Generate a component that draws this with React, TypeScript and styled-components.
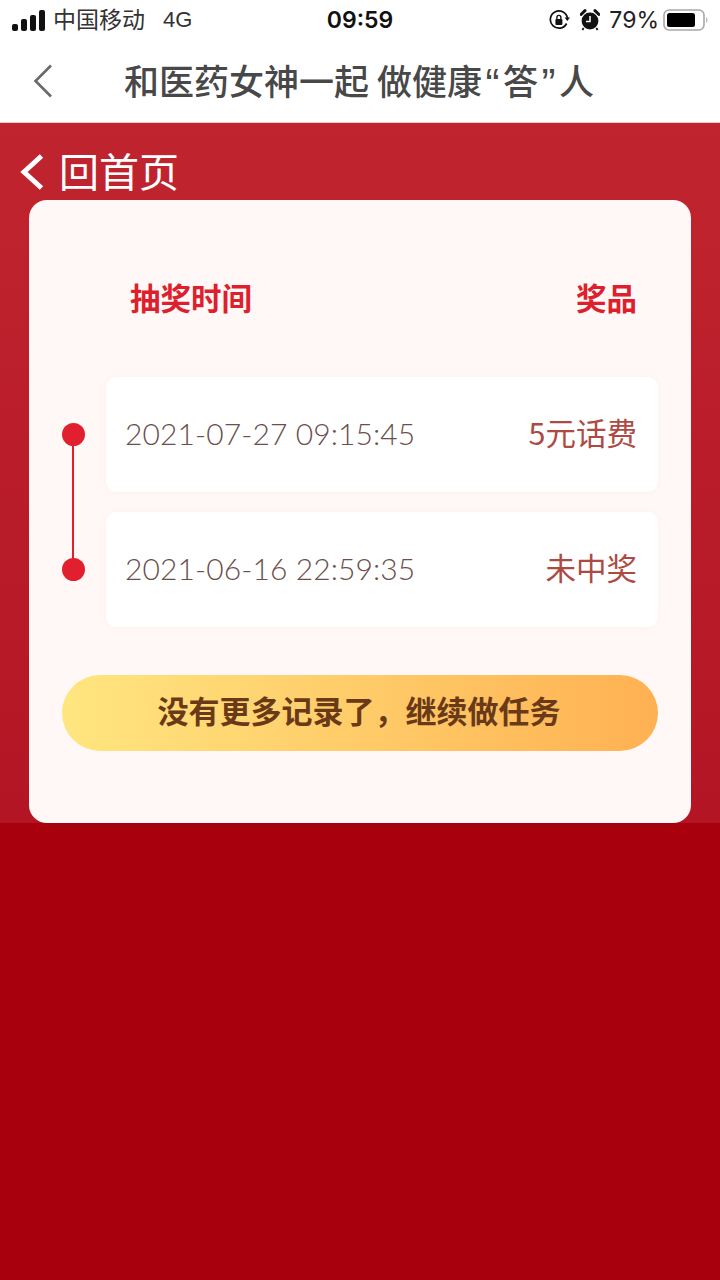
import React from 'react';
import styled, { createGlobalStyle } from 'styled-components';

const cjk = `"Noto Sans CJK SC", "Noto Sans", sans-serif`;

const GlobalStyle = createGlobalStyle`
    html, body {
        margin: 0;
        padding: 0;
        background: #a8000c;
    }
    * {
        box-sizing: border-box;
    }
`;

const Page = styled.div`
    display: flex;
    flex-direction: column;
    font-family: ${cjk};
    height: 1280px;
    overflow: hidden;
    width: 720px;
`;

const StatusBar = styled.div`
    align-items: center;
    background: #ffffff;
    color: #111111;
    display: grid;
    grid-template-columns: 1fr auto 1fr;
    height: 40px;
    padding: 0 12px;
`;

const StatusStart = styled.div`
    align-items: center;
    color: #333333;
    display: flex;
    font-size: 23px;
    gap: 8px;
    line-height: 1;
`;

const CarrierName = styled.span`
    margin-top: -3px;
`;

const StatusEnd = styled.div`
    align-items: center;
    color: #222222;
    display: flex;
    font-family: "Inter", sans-serif;
    font-size: 23px;
    justify-content: flex-end;
`;

const Clock = styled.div`
    font-family: "Inter", sans-serif;
    font-size: 23px;
    font-weight: 600;
`;

const Network = styled.span`
    font-family: "Liberation Sans", sans-serif;
    font-size: 22px;
    margin-left: 10px;
`;

const Percent = styled.span`
    margin: 0 4px 0 9px;
`;

const AlarmWrap = styled.span`
    display: flex;
    margin-left: 10px;
`;

const NavBar = styled.div`
    align-items: center;
    background: #ffffff;
    border-bottom: 1px solid #e9c9cb;
    display: flex;
    height: 83px;
    padding: 0 0 0 33px;
`;

const NavTitle = styled.div`
    color: #484848;
    font-size: 35px;
    font-weight: 500;
    line-height: 1;
    margin: -4px 0 0 71px;
    white-space: nowrap;
`;

const TitleQuote = styled.span`
    display: inline-block;
    font-family: "Liberation Sans", sans-serif;
    font-size: 42px;
    height: 35px;
    line-height: 44px;
    text-align: center;
    vertical-align: top;
    width: 21px;
`;

const RedPanel = styled.div`
    background: linear-gradient(180deg, #c0252f 0%, #b41524 100%);
    display: flex;
    flex-direction: column;
    height: 700px;
    padding: 0 29px;
`;

const HomeLink = styled.div`
    align-items: center;
    color: #ffffff;
    display: flex;
    font-size: 40px;
    gap: 15px;
    height: 77px;
    line-height: 1;
    margin-left: -9px;
    padding-top: 21px;
`;

const HomeLabel = styled.span`
    margin-top: -5px;
`;

const Card = styled.div`
    background: #fff8f6;
    border-radius: 18px;
    display: flex;
    flex: 1;
    flex-direction: column;
    padding: 0 33px;
`;

const HeaderRow = styled.div`
    color: #dd1f2e;
    display: flex;
    font-size: 30.5px;
    font-weight: 700;
    height: 177px;
    justify-content: space-between;
    line-height: 1;
    padding: 82px 21px 0 68px;
`;

const Timeline = styled.div`
    display: flex;
    flex-direction: column;
    gap: 20px;
`;

const Row = styled.div`
    align-items: center;
    display: flex;
    height: 115px;
`;

const Dot = styled.div<{ $line?: boolean }>`
    background: #e11f2f;
    border-radius: 50%;
    flex: none;
    height: 23px;
    margin-right: 21px;
    position: relative;
    width: 23px;
    &:after {
        background: #e11f2f;
        content: "";
        display: ${(p) => (p.$line ? 'block' : 'none')};
        height: 116px;
        left: 10px;
        position: absolute;
        top: 20px;
        width: 2px;
    }
`;

const RowCard = styled.div`
    align-items: center;
    background: #ffffff;
    border-radius: 10px;
    box-shadow: 0 0 6px rgba(190, 120, 100, 0.05);
    display: flex;
    flex: 1;
    height: 100%;
    justify-content: space-between;
    padding: 0 21px 0 19px;
`;

const TimeText = styled.div`
    color: #6a4f4b;
    font-family: "Lato", sans-serif;
    font-size: 30px;
    font-weight: 300;
    letter-spacing: 0.1px;
    margin-top: -4px;
`;

const PrizeText = styled.div`
    color: #ad4a42;
    font-family: ${cjk};
    font-size: 30.5px;
    margin-top: -6px;
`;

const ActionButton = styled.div`
    align-items: center;
    background: linear-gradient(90deg, #ffe680 0%, #ffb152 100%);
    border-radius: 38px;
    color: #6a3a18;
    display: flex;
    font-size: 31px;
    font-weight: 700;
    height: 76px;
    justify-content: center;
    margin-top: 48px;
    padding: 0 2px 7px 0;
`;

const SignalBars = () => (
    <svg width="33" height="21" viewBox="0 0 33 21" fill="#111111">
        <rect x="0" y="14" width="6" height="7" rx="2" />
        <rect x="9" y="9" width="6" height="12" rx="2" />
        <rect x="18" y="5" width="6" height="16" rx="2" />
        <rect x="27" y="0" width="6" height="21" rx="2" />
    </svg>
);

const RotationLock = () => (
    <svg width="22" height="22" viewBox="0 0 22 22" fill="none">
        <path d="M18.6 14.5A8.6 8.6 0 1 1 19.4 9" stroke="#111111" strokeWidth="1.7" />
        <path d="M16.6 8.6h5.4l-2.7 3.4z" fill="#111111" />
        <rect x="7.4" y="10" width="7" height="6" rx="1" fill="#111111" />
        <path d="M8.9 10V8.4a2 2 0 0 1 4 0V10" stroke="#111111" strokeWidth="1.4" />
    </svg>
);

const AlarmClock = () => (
    <svg width="20" height="22" viewBox="0 0 20 22" fill="none">
        <circle cx="10" cy="12" r="8.4" fill="#111111" />
        <path d="M1 5.5 5 1.6M19 5.5 15 1.6" stroke="#111111" strokeWidth="3" strokeLinecap="round" />
        <path d="M3.6 19 2.4 21M16.4 19l1.2 2" stroke="#111111" strokeWidth="1.8" />
        <path d="M10 7v5.4H6" stroke="#ffffff" strokeWidth="1.5" />
    </svg>
);

const Battery = () => (
    <svg width="45" height="22" viewBox="0 0 45 22" fill="none">
        <rect x="1" y="1" width="40" height="20" rx="5" stroke="#a8a8a8" strokeWidth="1.6" />
        <rect x="4" y="4" width="28" height="14" rx="2.5" fill="#000000" />
        <path d="M43 8v6c1-.5 1.500-1.600 1.500-3s-.5-2.500-1.500-3z" fill="#bdbdbd" />
    </svg>
);

const NavChevron = () => (
    <svg width="20" height="34" viewBox="0 0 20 34" fill="none">
        <path d="M18 1.500 2.500 17 18 32.500" stroke="#6a6a6a" strokeWidth="2.600" />
    </svg>
);

const HomeChevron = () => (
    <svg width="24" height="36" viewBox="0 0 24 36" fill="none">
        <path d="M21.500 2 4 18l17.500 16" stroke="#ffffff" strokeWidth="5" />
    </svg>
);

const records = [
    { time: '2021-07-27 09:15:45', prize: '5元话费' },
    { time: '2021-06-16 22:59:35', prize: '未中奖' },
];

const App = () => {
    return (
        <Page>
            <GlobalStyle />
            <StatusBar>
                <StatusStart>
                    <SignalBars />
                    <CarrierName>中国移动</CarrierName>
                    <Network>4G</Network>
                </StatusStart>
                <Clock>09:59</Clock>
                <StatusEnd>
                    <RotationLock />
                    <AlarmWrap>
                        <AlarmClock />
                    </AlarmWrap>
                    <Percent>79%</Percent>
                    <Battery />
                </StatusEnd>
            </StatusBar>
            <NavBar>
                <NavChevron />
                <NavTitle>
                    和医药女神一起 做健康<TitleQuote>“</TitleQuote>答<TitleQuote>”</TitleQuote>人
                </NavTitle>
            </NavBar>
            <RedPanel>
                <HomeLink>
                    <HomeChevron />
                    <HomeLabel>回首页</HomeLabel>
                </HomeLink>
                <Card>
                    <HeaderRow>
                        <span>抽奖时间</span>
                        <span>奖品</span>
                    </HeaderRow>
                    <Timeline>
                        {records.map((record, i) => (
                            <Row key={record.time}>
                                <Dot $line={i < records.length - 1} />
                                <RowCard>
                                    <TimeText>{record.time}</TimeText>
                                    <PrizeText>{record.prize}</PrizeText>
                                </RowCard>
                            </Row>
                        ))}
                    </Timeline>
                    <ActionButton>没有更多记录了，继续做任务</ActionButton>
                </Card>
            </RedPanel>
        </Page>
    );
};

export default App;
